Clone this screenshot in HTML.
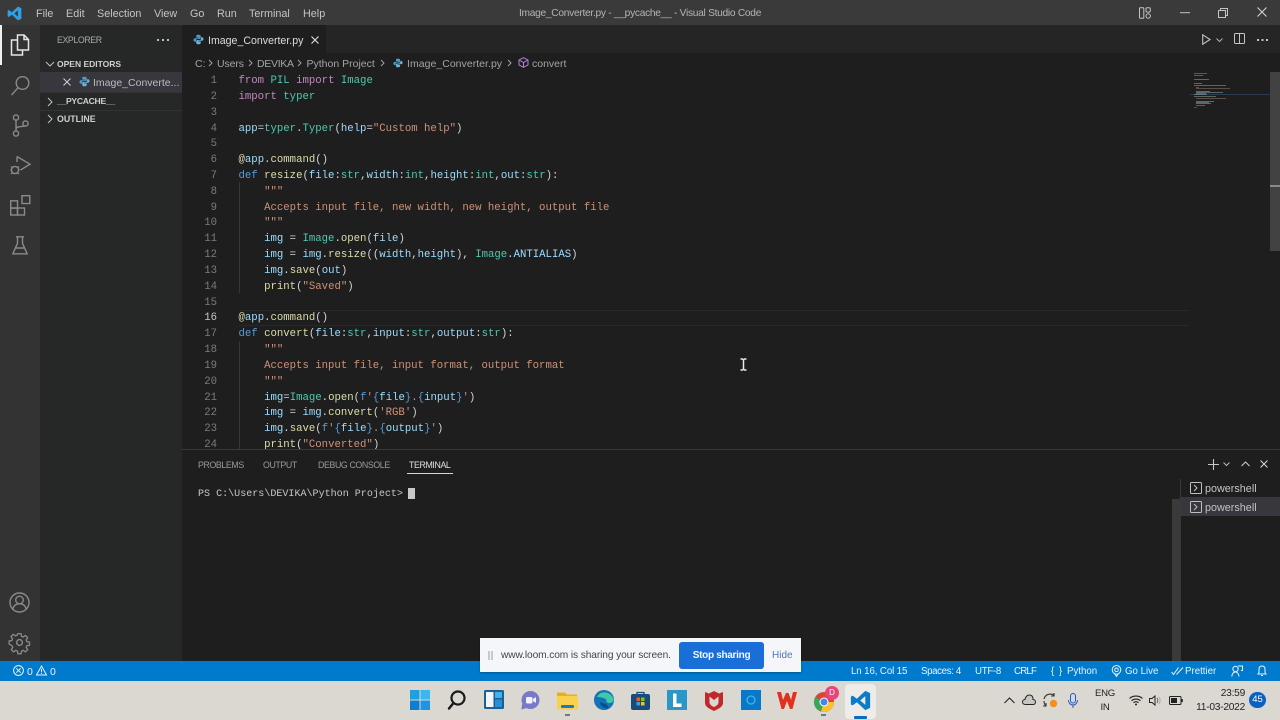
<!DOCTYPE html>
<html><head><meta charset="utf-8"><title>Image_Converter.py</title>
<style>
*{box-sizing:border-box}
html,body{margin:0;padding:0;width:1280px;height:720px;overflow:hidden;background:#1e1e1e}
body{position:relative;font-family:"Liberation Sans",sans-serif;color:#ccc}
.a{position:absolute;white-space:nowrap}
svg{position:absolute;overflow:visible}
.m{position:absolute;top:5.500px;font-size:10.800px;line-height:16px;color:#c4c4c4}
.l{position:absolute;left:190px;width:980px;height:16px;margin-top:1px;line-height:16px;font-family:"Liberation Mono",monospace;font-size:10.67px;color:#d4d4d4;white-space:pre}
.l i{font-style:normal;position:absolute;left:0;width:27px;text-align:right;color:#7b7b7b}
.l b{font-weight:normal;position:absolute;left:48.5px}
.k{color:#c586c0}.d{color:#569cd6}.t{color:#4ec9b0}.s{color:#ce9178}.v{color:#9cdcfe}.f{color:#dcdcaa}
.st{position:absolute;top:663.500px;font-size:9.700px;line-height:16px;color:#e8f3fb;white-space:nowrap}
.ic{fill:none;stroke:#8a8a8a;stroke-width:1.4}
.mm{position:absolute;height:1px;opacity:.6}
.bc{position:absolute;top:55.500px;font-size:10.500px;line-height:16px;color:#a4a4a4;white-space:nowrap}
.pt{position:absolute;top:457px;font-size:8.800px;letter-spacing:-.38px;line-height:16px;color:#9a9a9a;white-space:nowrap}
</style></head><body>

<!-- title bar -->
<div class="a" style="left:0;top:0;width:1280px;height:25px;background:#3a3a3a"></div>
<svg style="left:7px;top:6px" width="15" height="15" viewBox="0 0 24 24"><path d="M17.500 1 23 3.600v16.800L17.500 23 7.800 14l-4.700 3.600L1 16.500v-9l2.100-1.100L7.800 10zM17.500 7l-5.800 5 5.800 5z" fill="#2f9fe6" fill-rule="evenodd"/></svg>
<div class="m" style="left:36px">File</div>
<div class="m" style="left:66px">Edit</div>
<div class="m" style="left:97px">Selection</div>
<div class="m" style="left:154px">View</div>
<div class="m" style="left:190px">Go</div>
<div class="m" style="left:217px">Run</div>
<div class="m" style="left:249px">Terminal</div>
<div class="m" style="left:303px">Help</div>
<div class="a" style="left:519px;top:5.500px;font-size:10.200px;letter-spacing:-.28px;line-height:16px;color:#b4b4b4">Image_Converter.py - __pycache__ - Visual Studio Code</div>
<svg style="left:1139px;top:7px" width="12" height="12" viewBox="0 0 12 12"><rect x=".5" y=".8" width="4.300" height="10.400" rx=".6" fill="none" stroke="#c4c4c4"/><rect x="7" y=".8" width="4.300" height="4.300" rx="1.200" fill="none" stroke="#c4c4c4"/><circle cx="9.200" cy="9" r="2.200" fill="none" stroke="#c4c4c4"/></svg>
<svg style="left:1180px;top:12px" width="10" height="2"><path d="M0 .7h10" stroke="#c4c4c4"/></svg>
<svg style="left:1218px;top:8px" width="10" height="10" viewBox="0 0 10 10"><path d="M.5 2.500h7v7h-7zM2.500 2.500V.5h7v7h-2" fill="none" stroke="#c4c4c4"/></svg>
<svg style="left:1257px;top:7px" width="10" height="10" viewBox="0 0 10 10"><path d="M.5.500l9 9M9.500.500l-9 9" stroke="#d0d0d0" stroke-width="1.100"/></svg>

<!-- activity bar -->
<div class="a" style="left:0;top:25px;width:40px;height:636px;background:#333"></div>
<div class="a" style="left:0;top:25px;width:2px;height:40px;background:#f0f0f0"></div>
<svg style="left:10px;top:34px" width="20" height="22" viewBox="0 0 20 22"><path d="M7.500 1H14l4.500 4.500V16H7.500zM14 1v4.500h4.500M7.500 6H1.500v15h11v-5" fill="none" stroke="#e6e6e6" stroke-width="1.500"/></svg>
<svg style="left:10px;top:75px" width="21" height="21" viewBox="0 0 21 21"><circle cx="12.500" cy="8" r="6.300" class="ic"/><path d="M8 12.800 1.500 20" class="ic"/></svg>
<svg style="left:12px;top:114px" width="17" height="23" viewBox="0 0 17 23"><circle cx="4" cy="3.500" r="2.600" class="ic"/><circle cx="4" cy="19.500" r="2.600" class="ic"/><circle cx="13.500" cy="9.500" r="2.600" class="ic"/><path d="M4 6v11M4 15c0-3.500 7-1.500 9.500-3.500" class="ic"/></svg>
<svg style="left:10px;top:155px" width="21" height="21" viewBox="0 0 21 21"><path d="M7 1.500 20 9.200 10.500 15M7 1.500V7" class="ic"/><circle cx="5" cy="15" r="3.600" class="ic"/><path d="M1 11.500l1.800 1.500M9 11.500 7.200 13M.5 15H1.500M8.500 15H9.500M1 19l1.800-1.500M9 19l-1.800-1.500" class="ic"/></svg>
<svg style="left:10px;top:195px" width="21" height="21" viewBox="0 0 21 21"><rect x=".7" y="5.800" width="6.800" height="7.300" class="ic"/><rect x=".7" y="13" width="6.800" height="7" class="ic"/><rect x="7.500" y="13" width="7" height="7" class="ic"/><rect x="12" y=".7" width="7.800" height="7.800" class="ic"/></svg>
<svg style="left:12px;top:236px" width="16" height="19" viewBox="0 0 16 19"><path d="M4 .8h8M5.500.8v6.500L.8 17.800h14.400L10.500 7.300V.8M3.500 12h9" class="ic"/></svg>
<svg style="left:9px;top:592px" width="21" height="21" viewBox="0 0 21 21"><circle cx="10.500" cy="10.500" r="9.500" class="ic"/><circle cx="10.500" cy="8" r="3.800" class="ic"/><path d="M3.800 17c1-4 3.500-5.200 6.700-5.200s5.700 1.200 6.700 5.200" class="ic"/></svg>
<svg style="left:9px;top:632px" width="21" height="21" viewBox="0 0 21 21"><circle cx="10.500" cy="10.500" r="2.900" class="ic"/><path d="M8.800 1h3.400l.5 2.800 1.800.8 2.400-1.600 2.400 2.400-1.600 2.400.8 1.800 2.800.5v3.400l-2.800.5-.8 1.800 1.600 2.400-2.400 2.400-2.400-1.600-1.800.8-.5 2.800H8.800l-.5-2.800-1.800-.8-2.400 1.600-2.400-2.400 1.600-2.400-.8-1.800L-.6 12.300V8.900l2.800-.5.800-1.800L1.400 4.200l2.400-2.400 2.400 1.600 1.800-.8z" class="ic" transform="translate(.7 .7) scale(.93)"/></svg>

<!-- sidebar -->
<div class="a" style="left:40px;top:25px;width:142px;height:636px;background:#262727"></div>
<div class="a" style="left:57px;top:32px;font-size:8.800px;letter-spacing:-.4px;line-height:16px;color:#a8a8a8">EXPLORER</div>
<div class="a" style="left:157px;top:39px;width:2.200px;height:2px;background:#c0c0c0;box-shadow:5px 0 #c0c0c0,10px 0 #c0c0c0"></div>
<svg style="left:45px;top:61px" width="10" height="6" viewBox="0 0 10 6"><path d="M1 1l4 4 4-4" fill="none" stroke="#c0c0c0"/></svg>
<div class="a" style="left:57px;top:56px;font-size:8.500px;line-height:16px;font-weight:bold;color:#cfcfcf">OPEN EDITORS</div>
<div class="a" style="left:40px;top:72px;width:142px;height:20px;background:#37373d"></div>
<svg style="left:63px;top:78px" width="8" height="8" viewBox="0 0 8 8"><path d="M.5.500l7 7M7.500.500l-7 7" stroke="#d0d0d0" stroke-width="1"/></svg>
<svg style="left:79px;top:76px" width="11" height="11" viewBox="0 0 12 12"><path d="M6 .8C3.500.8 3.500 1.800 3.500 3v1H6.300v.6H2.500C1 4.600.5 5.500.5 6.500s.6 2 1.700 2H3.200V7c0-1 .8-1.600 1.800-1.600h2.200C8 5.400 8.500 4.800 8.500 4V2.500C8.500 1.300 7.500.8 6 .8z" fill="#4d9bc6"/><path d="M6 11.200c2.500 0 2.500-1 2.500-2.200V8H5.700v-.6h3.800c1.500 0 2-.9 2-1.900s-.6-2-1.700-2H8.800V5c0 1-.8 1.600-1.800 1.600H4.800C4 6.600 3.500 7.200 3.500 8v1.500c0 1.200 1 1.700 2.500 1.700z" fill="#6fb2d6"/></svg>
<div class="a" style="left:93px;top:75px;font-size:10.500px;line-height:16px;color:#bdbdbd">Image_Converte...</div>
<div class="a" style="left:40px;top:92px;width:142px;height:1px;background:#333"></div>
<svg style="left:47px;top:97px" width="6" height="10" viewBox="0 0 6 10"><path d="M1 1l4 4-4 4" fill="none" stroke="#c0c0c0"/></svg>
<div class="a" style="left:57px;top:93px;font-size:8.600px;letter-spacing:-.3px;line-height:16px;font-weight:bold;color:#cfcfcf">__PYCACHE__</div>
<div class="a" style="left:40px;top:110px;width:142px;height:1px;background:#333"></div>
<svg style="left:47px;top:114px" width="6" height="10" viewBox="0 0 6 10"><path d="M1 1l4 4-4 4" fill="none" stroke="#c0c0c0"/></svg>
<div class="a" style="left:57px;top:111px;font-size:8.800px;line-height:16px;font-weight:bold;color:#cfcfcf">OUTLINE</div>

<!-- tabs -->
<div class="a" style="left:182px;top:25px;width:1098px;height:28px;background:#252526"></div>
<div class="a" style="left:182px;top:25px;width:144px;height:28px;background:#1e1e1e"></div>
<svg style="left:193px;top:34px" width="11" height="11" viewBox="0 0 12 12"><path d="M6 .8C3.500.8 3.500 1.800 3.500 3v1H6.300v.6H2.500C1 4.600.5 5.500.5 6.500s.6 2 1.700 2H3.200V7c0-1 .8-1.600 1.800-1.600h2.200C8 5.400 8.500 4.800 8.500 4V2.500C8.500 1.300 7.500.8 6 .8z" fill="#4d9bc6"/><path d="M6 11.200c2.500 0 2.500-1 2.500-2.200V8H5.700v-.6h3.800c1.500 0 2-.9 2-1.900s-.6-2-1.700-2H8.800V5c0 1-.8 1.600-1.800 1.600H4.800C4 6.600 3.500 7.200 3.500 8v1.500c0 1.200 1 1.700 2.500 1.700z" fill="#6fb2d6"/></svg>
<div class="a" style="left:208px;top:32.500px;font-size:10.600px;line-height:16px;color:#dcdcdc">Image_Converter.py</div>
<svg style="left:311px;top:36px" width="8" height="8" viewBox="0 0 8 8"><path d="M.5.500l7 7M7.500.500l-7 7" stroke="#e0e0e0" stroke-width="1.100"/></svg>
<svg style="left:1202px;top:34px" width="9" height="11" viewBox="0 0 9 11"><path d="M.7.800 8 5.500.7 10.200z" fill="none" stroke="#c4c4c4" stroke-width="1.100"/></svg>
<svg style="left:1216px;top:38px" width="7" height="4" viewBox="0 0 7 4"><path d="M.5.500 3.500 3.500 6.500.500" fill="none" stroke="#b0b0b0"/></svg>
<svg style="left:1234px;top:33px" width="11" height="11" viewBox="0 0 11 11"><rect x=".5" y=".5" width="10" height="10" rx="1" fill="none" stroke="#c4c4c4"/><path d="M5.500.5v10" stroke="#c4c4c4"/></svg>
<div class="a" style="left:1257px;top:39px;width:2px;height:2px;background:#c4c4c4;box-shadow:4.500px 0 #c4c4c4,9px 0 #c4c4c4"></div>

<!-- breadcrumb -->
<div class="bc" style="left:195px">C:</div>
<div class="bc" style="left:217px;letter-spacing:-.1px">Users</div>
<div class="bc" style="left:257px;letter-spacing:-.3px">DEVIKA</div>
<div class="bc" style="left:306.500px">Python Project</div>
<div class="bc" style="left:407px;letter-spacing:.03px">Image_Converter.py</div>
<div class="bc" style="left:532px">convert</div>
<svg style="left:0;top:0" width="1" height="1"><g fill="none" stroke="#a0a0a0"><path d="M209 60l3 3-3 3M249 60l3 3-3 3M298 60l3 3-3 3M381 60l3 3-3 3M508 60l3 3-3 3"/></g></svg>
<svg style="left:393px;top:58px" width="10" height="10" viewBox="0 0 12 12"><path d="M6 .8C3.500.8 3.500 1.800 3.500 3v1H6.300v.6H2.500C1 4.600.5 5.500.5 6.500s.6 2 1.700 2H3.200V7c0-1 .8-1.600 1.800-1.600h2.200C8 5.400 8.500 4.800 8.500 4V2.500C8.500 1.300 7.500.8 6 .8z" fill="#4d9bc6"/><path d="M6 11.200c2.500 0 2.500-1 2.500-2.200V8H5.700v-.6h3.800c1.500 0 2-.9 2-1.900s-.6-2-1.700-2H8.800V5c0 1-.8 1.600-1.800 1.600H4.800C4 6.600 3.500 7.200 3.500 8v1.500c0 1.200 1 1.700 2.500 1.700z" fill="#6fb2d6"/></svg>
<svg style="left:518px;top:57px" width="11" height="11" viewBox="0 0 11 11"><path d="M5.500.7 10 3v5L5.500 10.300 1 8V3zM1 3l4.500 2.500L10 3M5.500 5.500v4.800" fill="none" stroke="#b180d7"/></svg>

<!-- code -->
<div class="a" style="left:239px;top:310px;width:951px;height:15.500px;border-top:1px solid #282828;border-bottom:1px solid #282828"></div>
<div class="a" style="left:239px;top:182px;width:1px;height:111px;background:#363636"></div>
<div class="a" style="left:239px;top:341px;width:1px;height:109px;background:#363636"></div>

<div class="l" style="top:72px"><i>1</i><b><span class="k">from</span> <span class="t">PIL</span> <span class="k">import</span> <span class="t">Image</span></b></div>
<div class="l" style="top:87.800px"><i>2</i><b><span class="k">import</span> <span class="t">typer</span></b></div>
<div class="l" style="top:103.700px"><i>3</i></div>
<div class="l" style="top:119.500px"><i>4</i><b><span class="v">app</span>=<span class="t">typer</span>.<span class="t">Typer</span>(<span class="v">help</span>=<span class="s">"Custom help"</span>)</b></div>
<div class="l" style="top:135.300px"><i>5</i></div>
<div class="l" style="top:151.100px"><i>6</i><b><span class="f">@</span><span class="v">app</span>.<span class="f">command</span>()</b></div>
<div class="l" style="top:167px"><i>7</i><b><span class="d">def</span> <span class="f">resize</span>(<span class="v">file</span>:<span class="t">str</span>,<span class="v">width</span>:<span class="t">int</span>,<span class="v">height</span>:<span class="t">int</span>,<span class="v">out</span>:<span class="t">str</span>):</b></div>
<div class="l" style="top:182.800px"><i>8</i><b><span class="s">    """</span></b></div>
<div class="l" style="top:198.600px"><i>9</i><b><span class="s">    Accepts input file, new width, new height, output file</span></b></div>
<div class="l" style="top:214.400px"><i>10</i><b><span class="s">    """</span></b></div>
<div class="l" style="top:230.300px"><i>11</i><b>    <span class="v">img</span> = <span class="t">Image</span>.<span class="f">open</span>(<span class="v">file</span>)</b></div>
<div class="l" style="top:246.100px"><i>12</i><b>    <span class="v">img</span> = <span class="v">img</span>.<span class="f">resize</span>((<span class="v">width</span>,<span class="v">height</span>), <span class="t">Image</span>.<span class="v">ANTIALIAS</span>)</b></div>
<div class="l" style="top:261.900px"><i>13</i><b>    <span class="v">img</span>.<span class="f">save</span>(<span class="v">out</span>)</b></div>
<div class="l" style="top:277.700px"><i>14</i><b>    <span class="f">print</span>(<span class="s">"Saved"</span>)</b></div>
<div class="l" style="top:293.600px"><i>15</i></div>
<div class="l" style="top:309.400px"><i style="color:#c6c6c6">16</i><b><span class="f">@</span><span class="v">app</span>.<span class="f">command</span>()</b></div>
<div class="l" style="top:325.200px"><i>17</i><b><span class="d">def</span> <span class="f">convert</span>(<span class="v">file</span>:<span class="t">str</span>,<span class="v">input</span>:<span class="t">str</span>,<span class="v">output</span>:<span class="t">str</span>):</b></div>
<div class="l" style="top:341px"><i>18</i><b><span class="s">    """</span></b></div>
<div class="l" style="top:356.900px"><i>19</i><b><span class="s">    Accepts input file, input format, output format</span></b></div>
<div class="l" style="top:372.700px"><i>20</i><b><span class="s">    """</span></b></div>
<div class="l" style="top:388.500px"><i>21</i><b>    <span class="v">img</span>=<span class="t">Image</span>.<span class="f">open</span>(<span class="d">f</span><span class="s">'</span><span class="d">{</span><span class="v">file</span><span class="d">}</span><span class="s">.</span><span class="d">{</span><span class="v">input</span><span class="d">}</span><span class="s">'</span>)</b></div>
<div class="l" style="top:404.300px"><i>22</i><b>    <span class="v">img</span> = <span class="v">img</span>.<span class="f">convert</span>(<span class="s">'RGB'</span>)</b></div>
<div class="l" style="top:420.200px"><i>23</i><b>    <span class="v">img</span>.<span class="f">save</span>(<span class="d">f</span><span class="s">'</span><span class="d">{</span><span class="v">file</span><span class="d">}</span><span class="s">.</span><span class="d">{</span><span class="v">output</span><span class="d">}</span><span class="s">'</span>)</b></div>
<div class="l" style="top:436px"><i>24</i><b>    <span class="f">print</span>(<span class="s">"Converted"</span>)</b></div>

<!-- minimap -->
<div class="mm" style="left:1194px;top:73px;width:13px;background:#8a7a8a"></div>
<div class="mm" style="left:1194px;top:75px;width:9px;background:#7a8a8a"></div>
<div class="mm" style="left:1194px;top:79px;width:15px;background:#7f9aa5"></div>
<div class="mm" style="left:1194px;top:83px;width:8px;background:#8a9a8a"></div>
<div class="mm" style="left:1194px;top:85px;width:32px;background:#7f9a8a"></div>
<div class="mm" style="left:1196px;top:87px;width:3px;background:#8a6a5a"></div>
<div class="mm" style="left:1196px;top:88px;width:34px;background:#8a6a5a"></div>
<div class="mm" style="left:1196px;top:91px;width:14px;background:#7f9aa5"></div>
<div class="mm" style="left:1196px;top:92px;width:27px;background:#7f9aa5"></div>
<div class="mm" style="left:1196px;top:93px;width:10px;background:#7f9a8a"></div>
<div class="a" style="left:1190px;top:93.500px;width:80px;height:1px;background:#2c3c4c"></div>
<div class="mm" style="left:1194px;top:94px;width:13px;background:#8a9a8a"></div>
<div class="mm" style="left:1194px;top:96px;width:22px;background:#7f9a8a"></div>
<div class="mm" style="left:1196px;top:98px;width:30px;background:#8a6a5a"></div>
<div class="mm" style="left:1196px;top:101px;width:18px;background:#7f9aa5"></div>
<div class="mm" style="left:1196px;top:102px;width:13px;background:#7f9aa5"></div>
<div class="mm" style="left:1196px;top:103px;width:15px;background:#7f9aa5"></div>
<div class="mm" style="left:1196px;top:105px;width:9px;background:#8a8a7a"></div>
<div class="mm" style="left:1194px;top:107px;width:3px;background:#5a7a9a"></div>

<!-- scrollbar -->
<div class="a" style="left:1270px;top:72px;width:10px;height:179px;background:#424242"></div>
<div class="a" style="left:1270px;top:185px;width:10px;height:2px;background:#8a8a8a"></div>

<!-- I-beam cursor -->
<svg style="left:739px;top:358px" width="9" height="13" viewBox="0 0 9 13"><path d="M1.500 1H3.500L4.500 2 5.500 1H7.500M4.500 2v9M1.500 12H3.500L4.500 11 5.500 12H7.500" fill="none" stroke="#e8e8e8" stroke-width="1.500"/></svg>

<!-- panel -->
<div class="a" style="left:182px;top:449px;width:1098px;height:212px;background:#1e1e1e;border-top:1px solid #3a3a3a"></div>
<div class="pt" style="left:198px">PROBLEMS</div>
<div class="pt" style="left:263px">OUTPUT</div>
<div class="pt" style="left:318px">DEBUG CONSOLE</div>
<div class="pt" style="left:409px;color:#e0e0e0">TERMINAL</div>
<div class="a" style="left:407px;top:473px;width:46px;height:1px;background:#d8d8d8"></div>
<div class="a" style="left:198px;top:486.500px;font-family:'Liberation Mono',monospace;font-size:10.050px;line-height:16px;color:#c8c8c8">PS C:\Users\DEVIKA\Python Project&gt;</div>
<div class="a" style="left:408px;top:488px;width:6.500px;height:11px;background:#c8c8c8"></div>
<svg style="left:1208px;top:459px" width="11" height="11" viewBox="0 0 11 11"><path d="M5.500 0v11M0 5.500h11" stroke="#c8c8c8" stroke-width="1.100"/></svg>
<svg style="left:1223px;top:462px" width="7" height="4" viewBox="0 0 7 4"><path d="M.5.500 3.500 3.500 6.500.500" fill="none" stroke="#b8b8b8"/></svg>
<svg style="left:1241px;top:461px" width="9" height="6" viewBox="0 0 9 6"><path d="M.5 5 4.500 1 8.500 5" fill="none" stroke="#c8c8c8" stroke-width="1.100"/></svg>
<svg style="left:1260px;top:460px" width="8" height="8" viewBox="0 0 8 8"><path d="M.5.500l7 7M7.500.500l-7 7" stroke="#d0d0d0" stroke-width="1.100"/></svg>
<div class="a" style="left:1172px;top:499px;width:9px;height:162px;background:#3a3a3a"></div>
<div class="a" style="left:1180px;top:479px;width:1px;height:182px;background:#3a3a3a"></div>
<div class="a" style="left:1181px;top:497px;width:99px;height:19px;background:#37373d"></div>
<svg style="left:1190px;top:482px" width="12" height="12" viewBox="0 0 12 12"><rect x=".5" y=".5" width="11" height="11" rx="1" fill="none" stroke="#c0c0c0"/><path d="M4 3l3 3-3 3" fill="none" stroke="#c0c0c0"/></svg>
<div class="a" style="left:1205px;top:481px;font-size:10.800px;line-height:16px;color:#c4c4c4">powershell</div>
<svg style="left:1190px;top:501px" width="12" height="12" viewBox="0 0 12 12"><rect x=".5" y=".5" width="11" height="11" rx="1" fill="none" stroke="#c0c0c0"/><path d="M4 3l3 3-3 3" fill="none" stroke="#c0c0c0"/></svg>
<div class="a" style="left:1205px;top:500px;font-size:10.800px;line-height:16px;color:#c4c4c4">powershell</div>

<!-- status bar -->
<div class="a" style="left:0;top:661px;width:1280px;height:20px;background:#007acc"></div>
<svg style="left:13px;top:665px" width="11" height="11" viewBox="0 0 11 11"><circle cx="5.500" cy="5.500" r="4.900" fill="none" stroke="#e8f3fb"/><path d="M3.300 3.300l4.400 4.400M7.700 3.300 3.300 7.700" stroke="#e8f3fb"/></svg>
<div class="st" style="left:27px;font-size:10.500px">0</div>
<svg style="left:36px;top:665px" width="11" height="11" viewBox="0 0 11 11"><path d="M5.500 1 10.500 10H.5z" fill="none" stroke="#e8f3fb"/><path d="M5.500 4v3.300M5.500 8v1" stroke="#e8f3fb"/></svg>
<div class="st" style="left:50px;font-size:10.500px">0</div>
<div class="st" style="left:851px;letter-spacing:-.1px">Ln 16, Col 15</div>
<div class="st" style="left:921px;letter-spacing:-.35px">Spaces: 4</div>
<div class="st" style="left:975px;letter-spacing:-.3px">UTF-8</div>
<div class="st" style="left:1014px;letter-spacing:-.8px">CRLF</div>
<div class="st" style="left:1051px;letter-spacing:1px">{ }</div>
<div class="st" style="left:1067px">Python</div>
<svg style="left:1111px;top:665px" width="11" height="12" viewBox="0 0 11 12"><circle cx="5.500" cy="4.800" r="4.300" fill="none" stroke="#e8f3fb"/><circle cx="5.500" cy="4.800" r="1.800" fill="none" stroke="#e8f3fb"/><path d="M3.800 9 5.500 11.500 7.200 9" fill="none" stroke="#e8f3fb"/></svg>
<div class="st" style="left:1125px">Go Live</div>
<svg style="left:1171px;top:667px" width="13" height="8" viewBox="0 0 13 8"><path d="M.5 5 2.500 7.500 7.500.5M5.500 7.500 12 .5" fill="none" stroke="#e8f3fb"/></svg>
<div class="st" style="left:1185px">Prettier</div>
<svg style="left:1231px;top:665px" width="12" height="12" viewBox="0 0 12 12"><circle cx="4.500" cy="4" r="2.700" fill="none" stroke="#e8f3fb"/><path d="M.8 11.500C1.200 8.500 2.500 7 4.500 7s3 1.500 3.500 4.500M7 1h4.500v4.500H10" fill="none" stroke="#e8f3fb"/></svg>
<svg style="left:1257px;top:665px" width="10" height="12" viewBox="0 0 10 12"><path d="M1 9h8L8 7.500V4.500C8 2.500 7 1 5 1S2 2.500 2 4.500v3zM4 10.500h2" fill="none" stroke="#e8f3fb"/></svg>

<!-- loom -->
<div class="a" style="left:480px;top:638px;width:321px;height:34px;background:#f4f6f9;box-shadow:0 1px 2px rgba(0,0,0,.3)"></div>
<div class="a" style="left:488px;top:651px;width:2px;height:9px;background:#c8c8c8;box-shadow:3px 0 #c8c8c8"></div>
<div class="a" style="left:501px;top:647.500px;font-size:10.200px;letter-spacing:-.11px;line-height:16px;color:#444">www.loom.com is sharing your screen.</div>
<div class="a" style="left:679px;top:642px;width:85px;height:26.500px;border-radius:3px;background:#1a6ed8;color:#f4f8ff;font-size:10px;letter-spacing:-.3px;font-weight:bold;line-height:27px;text-align:center">Stop sharing</div>
<div class="a" style="left:772px;top:647.500px;font-size:10px;line-height:16px;color:#4f77b3">Hide</div>

<!-- taskbar -->
<div class="a" style="left:0;top:681px;width:1280px;height:39px;background:#dbd8d2"></div>
<svg style="left:410px;top:690px" width="20" height="20" viewBox="0 0 20 20"><path d="M0 0h9.500v9.500H0z" fill="#1e9fe0"/><path d="M10.500 0H20v9.500h-9.500z" fill="#3cb6ef"/><path d="M0 10.500h9.500V20H0z" fill="#0d7fd0"/><path d="M10.500 10.500H20V20h-9.500z" fill="#1f94e0"/></svg>
<svg style="left:448px;top:690px" width="18" height="20" viewBox="0 0 18 20"><circle cx="10" cy="8" r="6.500" fill="none" stroke="#1a1a1a" stroke-width="2.200"/><path d="M5.500 13 1 18.500" stroke="#1a1a1a" stroke-width="2.500" stroke-linecap="round"/></svg>
<svg style="left:484px;top:690px" width="20" height="19" viewBox="0 0 20 19"><rect width="20" height="19" rx="1.500" fill="#1a5f96"/><rect x="2" y="2" width="7.500" height="15" fill="#f2f6fa"/><rect x="11" y="2" width="7" height="6" fill="#3fb2ea"/><rect x="11" y="9.500" width="7" height="7.500" fill="#2a8fd0"/></svg>
<svg style="left:521px;top:691px" width="19" height="19" viewBox="0 0 19 19"><circle cx="9.500" cy="9" r="9" fill="#7a78c8"/><path d="M1 13 .5 18.500 6 17z" fill="#7a78c8"/><rect x="5" y="6" width="6.500" height="6.500" rx="1.500" fill="#f2f2fa"/><path d="M12 8l3-2v6l-3-2z" fill="#f2f2fa"/></svg>
<svg style="left:557px;top:691px" width="21" height="19" viewBox="0 0 21 19"><path d="M0 1.500h8l2 2h10V6H0z" fill="#e8ae1c"/><rect y="5" width="21" height="14" rx="1" fill="#fad04c"/><rect x="4" y="14" width="13" height="3" rx="1" fill="#1a78c8"/></svg>
<div class="a" style="left:565px;top:714px;width:5px;height:2px;background:#777"></div>
<svg style="left:594px;top:690px" width="20" height="20" viewBox="0 0 20 20"><circle cx="10" cy="10" r="10" fill="#1273b8"/><path d="M3 7C6 0 17 1 19.500 9c.5 3-2.500 4.500-5 4-2-.5-2.500-1.500-2-3-1-2-6-3-9.500-3z" fill="#3fc9a8"/><path d="M6 12c0 4 4 7 9 6.500L12 14c-2-.5-4-1-6-2z" fill="#0a4f8a"/></svg>
<svg style="left:631px;top:691px" width="19" height="19" viewBox="0 0 19 19"><path d="M6 3V1.500h7V3" fill="none" stroke="#1a4a78" stroke-width="1.300"/><rect y="3" width="19" height="16" rx="2" fill="#1a4a78"/><rect x="5.500" y="6.500" width="3.500" height="3.500" fill="#f05a2a"/><rect x="10" y="6.500" width="3.500" height="3.500" fill="#7cc42a"/><rect x="5.500" y="11" width="3.500" height="3.500" fill="#2aa4ea"/><rect x="10" y="11" width="3.500" height="3.500" fill="#fac21e"/></svg>
<svg style="left:667px;top:690px" width="20" height="20" viewBox="0 0 20 20"><rect width="20" height="20" fill="#2b97c8"/><path d="M6 3.500h3.500v10h5V17H6z" fill="#fff"/></svg>
<svg style="left:705px;top:691px" width="18" height="20" viewBox="0 0 18 20"><path d="M0 1 4 2.500 9 0 14 2.500 18 1V12C18 16 13 18 9 20 5 18 0 16 0 12z" fill="#c0282c"/><path d="M4.500 5.500 9 9 13.500 5.500V11C13.500 14 11 15 9 16 7 15 4.500 14 4.500 11z" fill="#dbd8d2"/></svg>
<svg style="left:741px;top:690px" width="20" height="20" viewBox="0 0 20 20"><rect width="20" height="20" fill="#0a78c8"/><circle cx="10" cy="10" r="4" fill="none" stroke="#38b8f0" stroke-width="1.300"/></svg>
<svg style="left:777px;top:692px" width="20" height="17" viewBox="0 0 20 17"><path d="M0 0 4 0 6 8 9 1H11.500L14 8 16 0H20L15.500 17H13L10 9 7 17H4.500z" fill="#e0301e"/></svg>
<svg style="left:814px;top:692px" width="20" height="20" viewBox="0 0 20 20"><circle cx="10" cy="10" r="10" fill="#db4437"/><path d="M10 10 1.300 5A10 10 0 0 0 7 19.500z" fill="#3aa757"/><path d="M10 10H20A10 10 0 0 1 7 19.500z" fill="#fbc02d"/><circle cx="10" cy="10" r="4.500" fill="#fff"/><circle cx="10" cy="10" r="3.500" fill="#4285f4"/></svg>
<div class="a" style="left:825px;top:686px;width:14px;height:14px;border-radius:50%;background:#e8437a;color:#fff;font-size:8px;line-height:14px;text-align:center">D</div>
<div class="a" style="left:821px;top:714px;width:5px;height:2px;background:#777"></div>
<div class="a" style="left:845px;top:684px;width:31px;height:35px;border-radius:4px;background:#eeece8"></div>
<svg style="left:850px;top:690px" width="21" height="21" viewBox="0 0 24 24"><path d="M17.500 1 23 3.600v16.800L17.500 23 7.800 14l-4.700 3.600L1 16.500v-9l2.100-1.100L7.800 10zM17.500 7l-5.800 5 5.800 5z" fill="#0d7cc8" fill-rule="evenodd"/></svg>
<div class="a" style="left:854px;top:716px;width:13px;height:2.500px;border-radius:1px;background:#0a6cc0"></div>

<!-- tray -->
<svg style="left:1004px;top:697px" width="11" height="7" viewBox="0 0 11 7"><path d="M.5 6 5.500 1 10.500 6" fill="none" stroke="#222" stroke-width="1.100"/></svg>
<svg style="left:1022px;top:694px" width="14" height="11" viewBox="0 0 14 11"><path d="M3.500 10.500C1.500 10.500.5 9.300.5 8S1.500 5.500 3 5.500C3.500 3 5 1 7.500 1S11 3 11 5.500c1.500 0 2.500 1.200 2.500 2.500s-1 2.500-2.500 2.500z" fill="#c8c6c2" stroke="#222"/></svg>
<svg style="left:1042px;top:692px" width="16" height="16" viewBox="0 0 16 16"><path d="M2 7C3 2.500 8.500 .5 12.500 3.500M1 14 4 14 4 11M12 1v3H9M4 14C2.500 12.500 2 11 2 9" fill="none" stroke="#333" stroke-width="1.100"/><circle cx="11.500" cy="11.500" r="3.700" fill="#f09020"/></svg>
<svg style="left:1068px;top:693px" width="10" height="16" viewBox="0 0 10 16"><rect x="2.500" y=".5" width="5" height="9.500" rx="2.500" fill="#d0d8f0" stroke="#2a5ab0"/><path d="M.5 7c0 3 2 5 4.500 5S9.500 10 9.500 7M5 12v3" fill="none" stroke="#2a5ab0"/></svg>
<div class="a" style="left:1089px;top:687px;width:32px;text-align:center;font-size:9.600px;letter-spacing:-.3px;line-height:14px;color:#222">ENG<br>IN</div>
<svg style="left:1129px;top:695px" width="14" height="11" viewBox="0 0 14 11"><path d="M.5 3.500C4 .3 10 .3 13.500 3.500M2.500 5.700C5 3.500 9 3.500 11.500 5.700M4.500 7.700C6 6.500 8 6.500 9.500 7.700" fill="none" stroke="#222" stroke-width="1.100"/><circle cx="7" cy="9.500" r="1" fill="#222"/></svg>
<svg style="left:1149px;top:695px" width="12" height="11" viewBox="0 0 12 11"><path d="M.5 3.500H3L6 1V10L3 7.500H.5z" fill="none" stroke="#222"/><path d="M8 3c1 1.500 1 3.500 0 5" fill="none" stroke="#666"/><path d="M10 2c1.500 2 1.500 5 0 7" fill="none" stroke="#aaa"/></svg>
<svg style="left:1169px;top:696px" width="14" height="9" viewBox="0 0 14 9"><rect x=".5" y=".5" width="11.500" height="8" rx="1" fill="none" stroke="#222"/><rect x="2" y="2" width="6" height="5" fill="#222"/><rect x="12.500" y="3" width="1.300" height="3" fill="#222"/></svg>
<div class="a" style="left:1190px;top:686.500px;width:55px;text-align:right;font-size:10.200px;letter-spacing:-.25px;line-height:14px;color:#222">23:59<br>11-03-2022</div>
<div class="a" style="left:1249px;top:692px;width:17px;height:16px;border-radius:8px;background:#0a62c0;color:#fff;font-size:9.500px;line-height:16px;text-align:center">45</div>

</body></html>
